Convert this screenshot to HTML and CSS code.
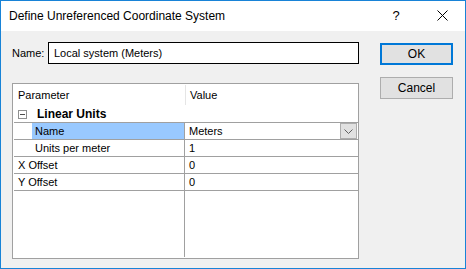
FILE: index.html
```html
<!DOCTYPE html>
<html lang="en">
<head>
    <meta charset="UTF-8">
    <title>Define Unreferenced Coordinate System</title>
    <link rel="stylesheet" href="styles.css">
</head>
<body>
    <div class="dialog">
        <div class="titlebar">
            <span class="title">Define Unreferenced Coordinate System</span>
            <span class="help">?</span>
            <span class="close">
                <svg width="11" height="11" viewBox="0 0 11 11">
                    <path d="M0.5 0.5 L10.5 10.5 M10.5 0.5 L0.5 10.5" stroke="#000" stroke-width="1" fill="none"/>
                </svg>
            </span>
        </div>

        <div class="content">
            <div class="main">
                <div class="name-row">
                    <label class="name-label">Name:</label>
                    <div class="name-input">Local system (Meters)</div>
                </div>

                <div class="grid">
                    <div class="grid-head">
                        <div class="head-cell">Parameter</div>
                        <div class="head-cell head-value">Value</div>
                    </div>

                    <div class="category">
                        <span class="toggle"></span>
                        <span class="category-name">Linear Units</span>
                    </div>

                    <div class="row">
                        <div class="param indent"><span class="param-text selected">Name</span></div>
                        <div class="value combo">
                            <span>Meters</span>
                            <span class="drop">
                                <svg width="9" height="5" viewBox="0 0 9 5">
                                    <path d="M0.5 0.5 L4.5 4.5 L8.5 0.5" stroke="#606060" stroke-width="1" fill="none"/>
                                </svg>
                            </span>
                        </div>
                    </div>
                    <div class="row">
                        <div class="param indent"><span class="param-text">Units per meter</span></div>
                        <div class="value">1</div>
                    </div>
                    <div class="row">
                        <div class="param"><span class="param-text">X Offset</span></div>
                        <div class="value">0</div>
                    </div>
                    <div class="row">
                        <div class="param"><span class="param-text">Y Offset</span></div>
                        <div class="value">0</div>
                    </div>

                    <div class="filler">
                        <div class="param"></div>
                        <div class="value"></div>
                    </div>
                </div>
            </div>

            <div class="buttons">
                <button class="btn btn-default">OK</button>
                <button class="btn">Cancel</button>
            </div>
        </div>
    </div>
</body>
</html>
```

FILE: styles.css
```css
* {
    margin: 0;
    padding: 0;
    box-sizing: border-box;
}

body {
    font-family: "Liberation Sans", Arial, sans-serif;
    font-size: 11px;
    color: #000;
    background: #fff;
}

.dialog {
    width: 466px;
    height: 269px;
    border: 1px solid #1883d7;
    background: #f0f0f0;
    display: flex;
    flex-direction: column;
}

/* title bar */
.titlebar {
    height: 30px;
    background: #fff;
    display: flex;
    align-items: center;
    padding-left: 8px;
}

.title {
    font-size: 12px;
    flex: 1;
}

.help {
    font-size: 13px;
    width: 46px;
    text-align: center;
    margin-top: -1px;
}

.close {
    width: 46px;
    display: flex;
    justify-content: center;
    margin-top: -2px;
}

/* body */
.content {
    flex: 1;
    display: flex;
    padding: 11px 12px 0 11px;
    gap: 21px;
}

.main {
    width: 347px;
}

.name-row {
    display: flex;
    align-items: center;
    height: 22px;
}

.name-label {
    width: 36px;
}

.name-input {
    flex: 1;
    height: 22px;
    border: 1px solid #000;
    background: #fff;
    padding: 4px 5px;
}

.grid {
    margin-top: 19px;
    height: 176px;
    border: 1px solid #a0a0a0;
    background: #fff;
    display: flex;
    flex-direction: column;
}

.grid-head {
    height: 22px;
    display: flex;
    align-items: center;
}

.head-cell {
    width: 172px;
    padding-left: 5px;
}

.head-value {
    border-left: 1px solid #e5e5e5;
    height: 20px;
    line-height: 20px;
    padding-left: 4px;
}

.category {
    height: 17px;
    border-bottom: 1px solid #a0a0a0;
    margin-left: 1px;
    display: flex;
    align-items: center;
}

.toggle {
    width: 9px;
    height: 9px;
    border: 1px solid #8e8f8f;
    margin-left: 4px;
    position: relative;
}

.toggle::after {
    content: "";
    position: absolute;
    left: 1px;
    top: 3px;
    width: 5px;
    height: 1px;
    background: #4d4d4d;
}

.category-name {
    font-weight: bold;
    font-size: 12px;
    margin-left: 10px;
}

.row {
    height: 17px;
    display: flex;
    border-bottom: 1px solid #a0a0a0;
    margin-left: 1px;
}

.param {
    width: 171px;
    border-right: 1px solid #a0a0a0;
    display: flex;
}

.param.indent {
    padding-left: 18px;
}

.param-text {
    flex: 1;
    padding-left: 4px;
    line-height: 16px;
}

.param.indent .param-text {
    padding-left: 3px;
}

.param-text.selected {
    background: #99c9ff;
}

.value {
    flex: 1;
    padding-left: 4px;
    line-height: 16px;
}

.combo {
    display: flex;
    justify-content: space-between;
}

.drop {
    width: 17px;
    height: 16px;
    background: #e1e1e1;
    border: 1px solid #adadad;
    display: flex;
    align-items: center;
    justify-content: center;
    margin-right: 1px;
}

.filler {
    flex: 1;
    display: flex;
    margin-left: 1px;
}

.filler .param {
    margin-bottom: 1px;
}

/* buttons */
.buttons {
    display: flex;
    flex-direction: column;
    gap: 12px;
    padding-top: 1px;
}

.btn {
    width: 73px;
    height: 22px;
    background: #e1e1e1;
    border: 1px solid #adadad;
    font-family: "Liberation Sans", Arial, sans-serif;
    font-size: 12px;
    color: #000;
}

.btn-default {
    border: 2px solid #0078d7;
}
```
